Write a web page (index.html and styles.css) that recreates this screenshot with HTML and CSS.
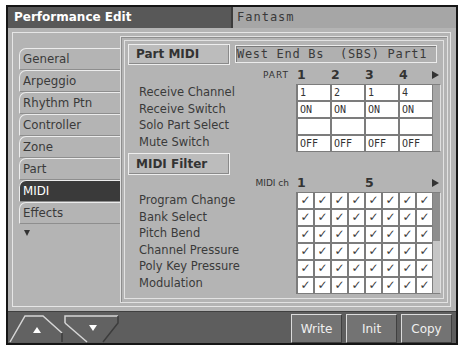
FILE: index.html
```html
<!DOCTYPE html>
<html lang="en">
<head>
  <meta charset="UTF-8">
  <title>Performance Edit</title>
  <link rel="stylesheet" href="styles.css">
</head>
<body>

<div class="screen">
  <div class="titlebar">
    <div class="title-main">Performance Edit</div>
    <div class="title-patch">Fantasm</div>
  </div>

  <div class="body">
    <div class="body-inner">
      <ul class="tabs">
        <li class="tab">General</li>
        <li class="tab">Arpeggio</li>
        <li class="tab">Rhythm Ptn</li>
        <li class="tab">Controller</li>
        <li class="tab">Zone</li>
        <li class="tab">Part</li>
        <li class="tab active">MIDI</li>
        <li class="tab">Effects</li>
        <li class="tab-more"></li>
      </ul>

      <div class="panel">
        <div class="panel-inner">
          <div class="panel-head">
            <div class="section-box">Part MIDI</div>
            <div class="patch-name">West End Bs  (SBS) Part1</div>
          </div>

          <div class="col-head">
            <span class="head-tag spaced">PART</span>
            <span class="col-num">1</span>
            <span class="col-num">2</span>
            <span class="col-num">3</span>
            <span class="col-num">4</span>
            <span class="arrow-right"></span>
          </div>
          <div class="param-area">
            <div class="labels">
              <div>Receive Channel</div>
              <div>Receive Switch</div>
              <div>Solo Part Select</div>
              <div>Mute Switch</div>
            </div>
            <div class="cells part-cells">
              <span>1</span><span>2</span><span>1</span><span>4</span>
              <span>ON</span><span>ON</span><span>ON</span><span>ON</span>
              <span></span><span></span><span></span><span></span>
              <span>OFF</span><span>OFF</span><span>OFF</span><span>OFF</span>
            </div>
            <div class="scrollbar part-scroll"></div>
          </div>

          <div class="section-box filter-box">MIDI Filter</div>

          <div class="col-head ch-head">
            <span class="head-tag">MIDI ch</span>
            <span class="col-num">1</span>
            <span class="col-num"></span>
            <span class="col-num"></span>
            <span class="col-num"></span>
            <span class="col-num">5</span>
            <span class="col-num"></span>
            <span class="col-num"></span>
            <span class="col-num"></span>
            <span class="arrow-right"></span>
          </div>
          <div class="param-area">
            <div class="labels">
              <div>Program Change</div>
              <div>Bank Select</div>
              <div>Pitch Bend</div>
              <div>Channel Pressure</div>
              <div>Poly Key Pressure</div>
              <div>Modulation</div>
            </div>
            <div class="cells check-cells">
              <span>✓</span><span>✓</span><span>✓</span><span>✓</span><span>✓</span><span>✓</span><span>✓</span><span>✓</span>
              <span>✓</span><span>✓</span><span>✓</span><span>✓</span><span>✓</span><span>✓</span><span>✓</span><span>✓</span>
              <span>✓</span><span>✓</span><span>✓</span><span>✓</span><span>✓</span><span>✓</span><span>✓</span><span>✓</span>
              <span>✓</span><span>✓</span><span>✓</span><span>✓</span><span>✓</span><span>✓</span><span>✓</span><span>✓</span>
              <span>✓</span><span>✓</span><span>✓</span><span>✓</span><span>✓</span><span>✓</span><span>✓</span><span>✓</span>
              <span>✓</span><span>✓</span><span>✓</span><span>✓</span><span>✓</span><span>✓</span><span>✓</span><span>✓</span>
            </div>
            <div class="scrollbar check-scroll"><div class="thumb"></div></div>
          </div>
        </div>
      </div>
    </div>
  </div>

  <div class="bottombar">
    <svg class="page-arrows" width="112" height="29" viewBox="0 0 112 29">
      <polygon points="2,28 17,2 35,2 54,19 54,28" fill="#626262"/>
      <polyline points="2,28 17,2 35,2 54,19" fill="none" stroke="#d6d6d6" stroke-width="1.5"/>
      <polyline points="54,19 54,28" fill="none" stroke="#3c3c3c" stroke-width="1.5"/>
      <polygon points="25,19 33,19 29,13" fill="#fff"/>
      <polygon points="57,2 110,2 110,9 95,28 79,28 57,9" fill="#626262"/>
      <polyline points="57,9 57,2 110,2" fill="none" stroke="#d6d6d6" stroke-width="1.5"/>
      <polyline points="57,9 79,28" fill="none" stroke="#d6d6d6" stroke-width="1.5"/>
      <polyline points="110,2 110,9 95,28" fill="none" stroke="#3c3c3c" stroke-width="1.5"/>
      <polygon points="81,11 89,11 85,17" fill="#fff"/>
    </svg>
    <div class="buttons">
      <button>Write</button>
      <button>Init</button>
      <button>Copy</button>
    </div>
  </div>
</div>

</body>
</html>
```

FILE: styles.css
```css
* {
  box-sizing: border-box;
}

body {
  margin: 0;
  background-color: #fff;
  font-family: "DejaVu Sans", sans-serif;
}

.screen {
  width: 452px;
  height: 340px;
  margin: 5px 0 0 6px;
  border: 2px solid #161616;
  background-color: #b4b4b4;
  display: flex;
  flex-direction: column;
}

/* title */
.titlebar {
  height: 21px;
  flex: none;
  display: flex;
}

.title-main {
  width: 223px;
  padding-left: 6px;
  background-color: #585858;
  color: #fff;
  font-weight: bold;
  font-size: 12px;
  line-height: 21px;
}

.title-patch {
  flex: 1;
  padding-left: 4px;
  background-color: #a6a6a6;
  border-left: 2px solid #3c3c3c;
  color: #3a3a3a;
  font-family: "DejaVu Sans Mono", monospace;
  font-size: 12px;
  letter-spacing: 1px;
  line-height: 21px;
}

/* body */
.body {
  flex: 1;
  padding: 4px 5px 4px 4px;
}

.body-inner {
  height: 100%;
  border: 1px solid #e6e6e6;
  display: flex;
}

.tabs {
  width: 107px;
  flex: none;
  list-style: none;
  margin: 0;
  padding: 15px 0 0 6px;
}

.tab {
  height: 22px;
  padding-left: 3px;
  border-top: 1px solid #ececec;
  border-left: 1px solid #ececec;
  border-bottom: 1px solid #8e8e8e;
  border-top-left-radius: 7px;
  color: #3a3a3a;
  font-size: 11.8px;
  line-height: 20px;
}

.tab.active {
  background-color: #3a3a3a;
  color: #fff;
}

.tab-more {
  width: 0;
  height: 0;
  margin: 6px 0 0 5px;
  border-left: 3.5px solid transparent;
  border-right: 3.5px solid transparent;
  border-top: 6px solid #333;
}

/* main panel */
.panel {
  flex: 1;
  margin: 3px 2px 3px 0;
  padding: 3px;
  border: 1px solid #e2e2e2;
  box-shadow: inset 1px 1px 0 #8e8e8e;
}

.panel-inner {
  height: 100%;
  padding: 3px 0 0 3px;
  border: 1px solid #e2e2e2;
}

.panel-head {
  display: flex;
  gap: 5px;
}

.section-box {
  width: 102px;
  height: 21px;
  padding-left: 7px;
  background-color: #bcbcbc;
  border: 1px solid #eeeeee;
  box-shadow: inset -1px -1px 0 #8a8a8a;
  color: #333;
  font-weight: bold;
  font-size: 12px;
  line-height: 19px;
}

.filter-box {
  height: 22px;
  margin-top: 1px;
  line-height: 20px;
}

.patch-name {
  width: 202px;
  height: 18px;
  margin-top: 1px;
  padding-left: 1px;
  background-color: #b0b0b0;
  border: 1px solid #ececec;
  box-shadow: inset 1px 1px 0 #7a7a7a;
  color: #3a3a3a;
  font-family: "DejaVu Sans Mono", monospace;
  font-size: 12px;
  letter-spacing: 0.7px;
  line-height: 16px;
  white-space: pre;
}

.col-head {
  height: 19px;
  display: flex;
  align-items: flex-end;
  padding-bottom: 4px;
  color: #333;
}

.ch-head {
  height: 17px;
}

.head-tag {
  width: 168px;
  padding-right: 7px;
  text-align: right;
  font-size: 9px;
  line-height: 10px;
}

.head-tag.spaced {
  letter-spacing: 1px;
}

.col-num {
  width: 34px;
  padding-left: 1px;
  font-weight: bold;
  font-size: 12.5px;
  line-height: 11px;
}

.ch-head .col-num {
  width: 17px;
}

.arrow-right {
  width: 0;
  height: 0;
  margin-bottom: 1px;
  border-top: 4px solid transparent;
  border-bottom: 4px solid transparent;
  border-left: 7px solid #333;
}

.param-area {
  display: flex;
  align-items: flex-start;
}

.labels {
  width: 168px;
  padding-left: 11px;
  color: #3a3a3a;
  font-size: 11.5px;
  line-height: 16.5px;
}

.cells {
  display: grid;
  grid-auto-rows: 15px;
  gap: 2px;
  padding: 1px 0 1px 2px;
  background-color: #7c7c7c;
}

.cells span {
  background-color: #fff;
  color: #333;
}

.part-cells {
  grid-template-columns: repeat(4, 32px);
}

.part-cells span {
  padding-left: 2px;
  font-family: "DejaVu Sans Mono", monospace;
  font-size: 10px;
  line-height: 15px;
}

.check-cells {
  grid-template-columns: repeat(8, 15px);
}

.check-cells span {
  color: #3c3c3c;
  text-align: center;
  font-weight: bold;
  font-size: 12px;
  line-height: 15px;
}

.scrollbar {
  width: 9px;
  border: 1px solid #808080;
  border-right-color: #e0e0e0;
  background-color: #c6c6c6;
}

.part-scroll {
  height: 68px;
  background-color: #a6a6a6;
}

.check-scroll {
  height: 102px;
}

.thumb {
  height: 48px;
  background-color: #8e8e8e;
}

/* bottom bar */
.bottombar {
  height: 32px;
  flex: none;
  display: flex;
  align-items: flex-end;
  justify-content: space-between;
  padding: 0 4px 0 0;
  background-color: #5e5e5e;
  border-top: 1px solid #404040;
}

.page-arrows {
  display: block;
}

.buttons {
  display: flex;
  gap: 4px;
}

button {
  width: 51px;
  height: 29px;
  padding: 0;
  background-color: #737373;
  border: 1px solid;
  border-color: #dcdcdc #404040 #404040 #dcdcdc;
  color: #f0f0f0;
  font-family: "DejaVu Sans", sans-serif;
  font-size: 12px;
}
```
